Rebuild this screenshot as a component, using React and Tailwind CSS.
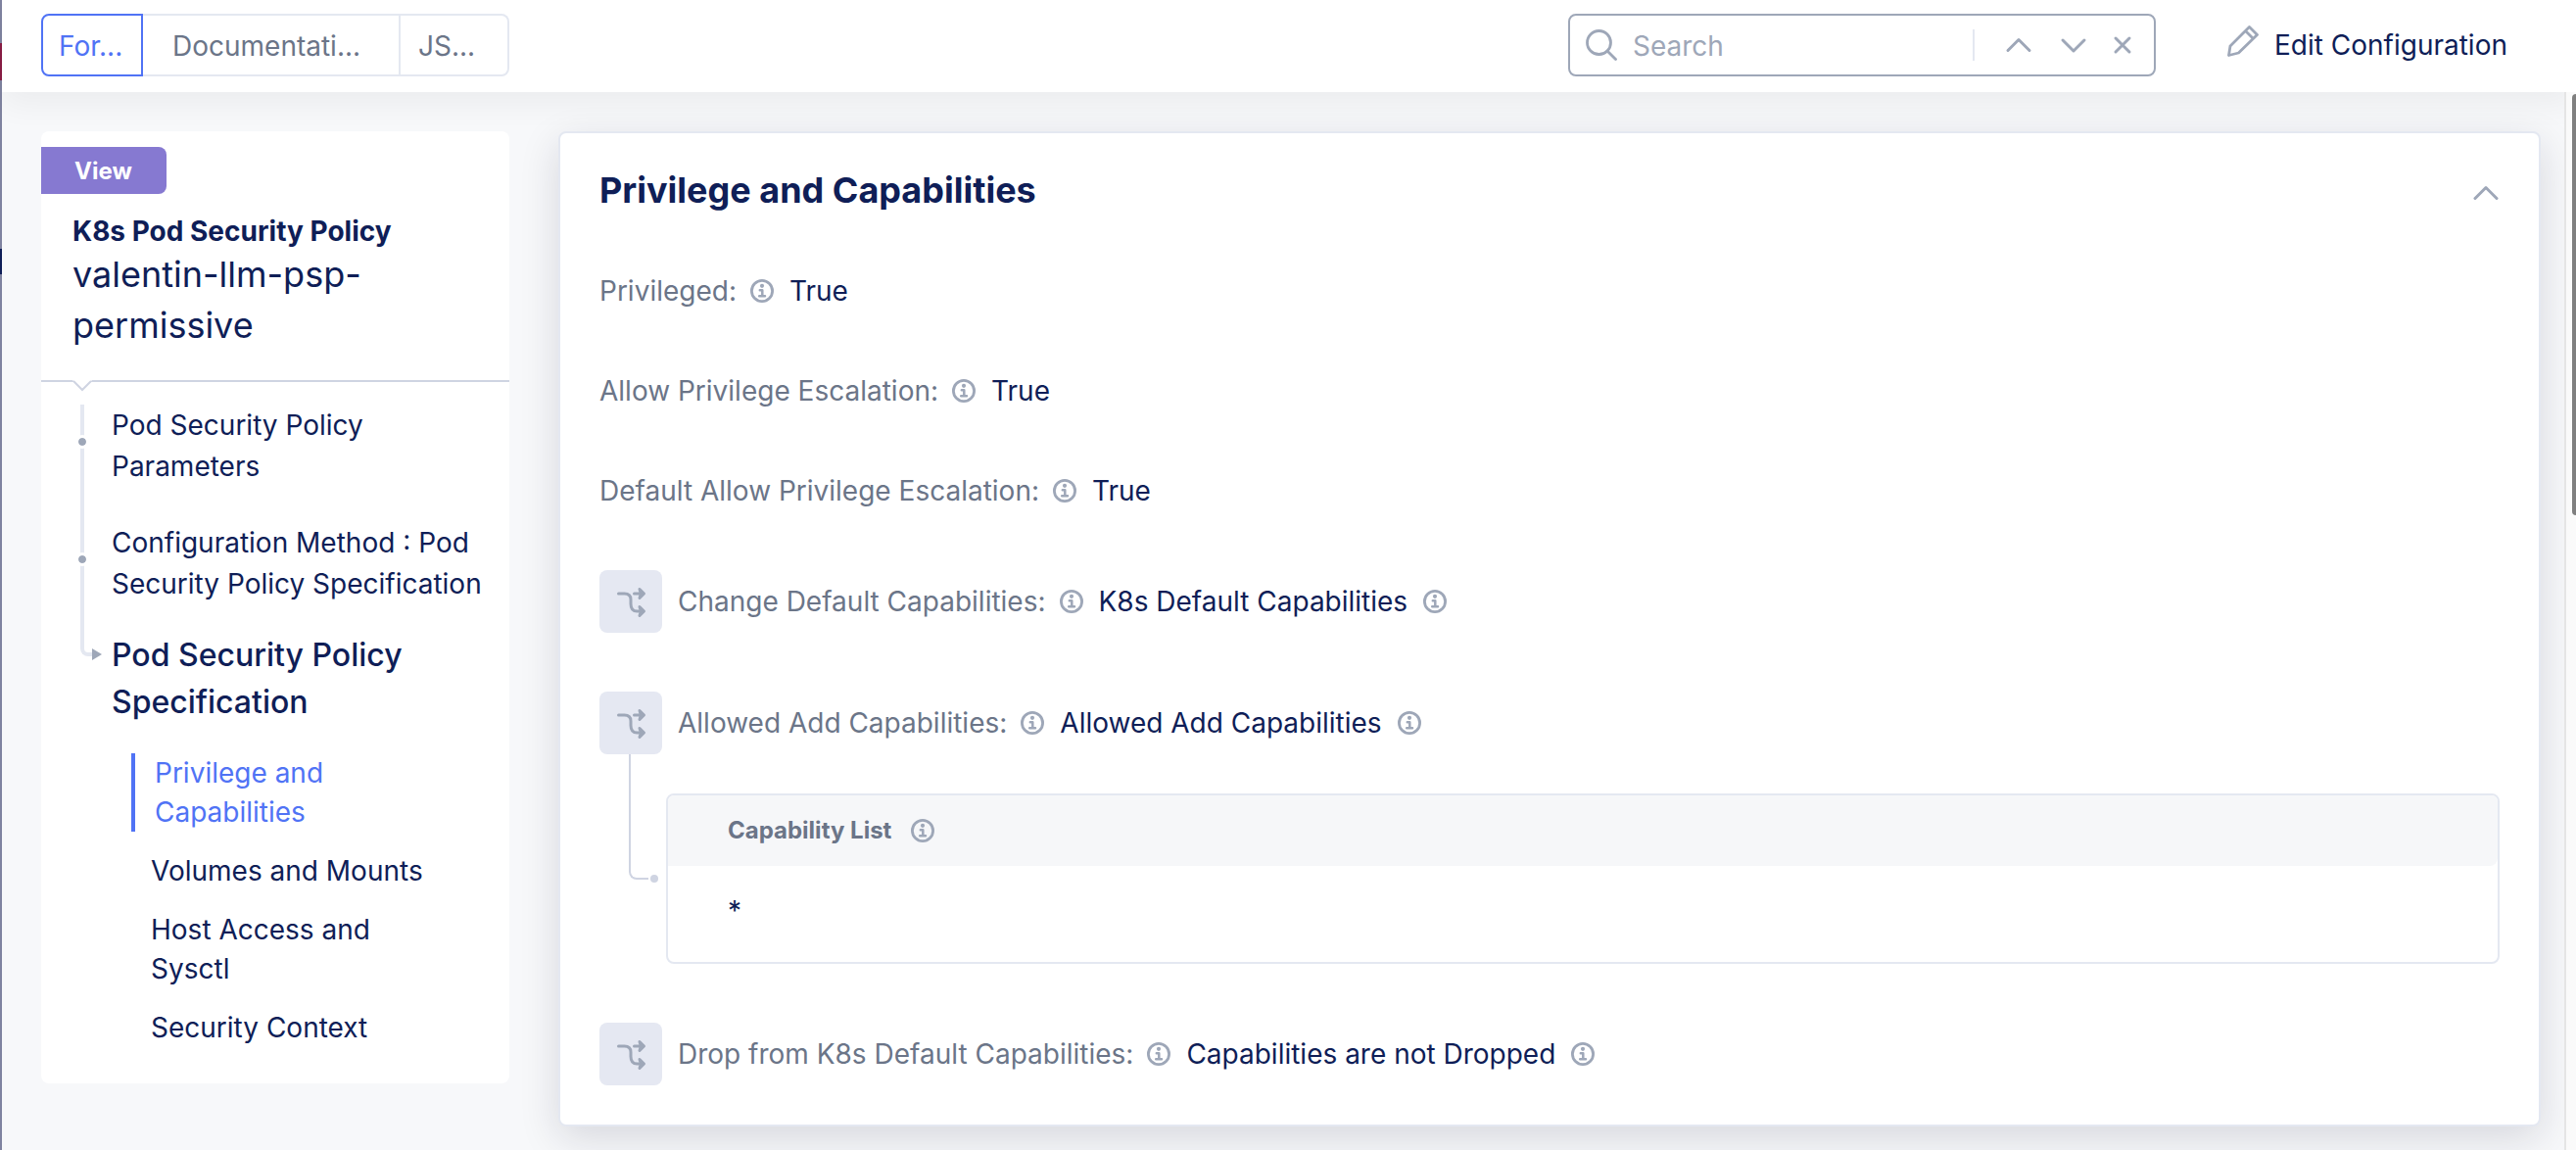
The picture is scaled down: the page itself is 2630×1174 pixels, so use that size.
import React from "react";

function InfoIcon({ label }) {
  return (
    <button type="button" aria-label={label} className="shrink-0">
      <svg viewBox="0 0 24 24" className="block size-6" fill="none" stroke="#9ea7b8">
        <circle cx="12" cy="12" r="10.6" strokeWidth="2.8" />
        <circle cx="12" cy="6.800" r="2.100" fill="#9ea7b8" stroke="none" />
        <path d="M9.800 11.200h2.500v5.800M9.200 17.300h5.800" strokeWidth="2.500" strokeLinecap="round" strokeLinejoin="round" />
      </svg>
    </button>
  );
}

function ChoiceIcon() {
  return (
    <span className="flex size-16 shrink-0 items-center justify-center rounded-lg bg-[#e5e8f2]">
      <svg viewBox="0 0 64 64" className="block size-16" fill="none" stroke="#9ea7b8" strokeWidth="3" strokeLinecap="round" strokeLinejoin="round">
        <path d="M19.500 24h6c4.500 0 6.500 2 6.500 6v4.500c0 5 2.500 7.500 6.500 7.500h6" />
        <path d="M35.500 24h9M41 19.500l4.500 4.500l-4.500 4.500l1.500-4.500zM41 37.500l4.500 4.500l-4.500 4.500l1.500-4.500z" fill="#9ea7b8" />
      </svg>
    </span>
  );
}

function Chevron({ down }) {
  return (
    <svg viewBox="0 0 28 28" className="block size-7" fill="none" stroke="#9ea7b8" strokeWidth="3" strokeLinecap="round" strokeLinejoin="round">
      <path d={down ? "M3 9l11 11l11-11" : "M3 19.500l11-11l11 11"} />
    </svg>
  );
}

function Field({ label, value, choice, valueInfo }) {
  return (
    <div className="flex items-center gap-4">
      {choice && <ChoiceIcon />}
      <dt className="flex items-center gap-[14px] text-[#6b7588]">
        <span>{label}:</span>
        <InfoIcon label={`About ${label}`} />
      </dt>
      <dd className="flex items-center gap-4">
        <span>{value}</span>
        {valueInfo && <InfoIcon label={`About ${value}`} />}
      </dd>
    </div>
  );
}

function Header() {
  return (
    <header className="flex h-[94px] items-start justify-between bg-white pt-[14px] pr-[70px] pl-10 shadow-[0_12px_32px_rgba(0,0,0,0.05)]">
      <div className="flex h-16 w-[478px] leading-[42px] text-[#6b7588]">
        <button type="button" className="w-[104px] rounded-l-lg border-2 border-[#5073f5] pt-[2px] pl-4 text-left text-[#5073f5]">
          For...
        </button>
        <button type="button" className="grow border-y-2 border-r-2 border-[#e4e8f1] pt-[2px] pl-[30px] text-left">
          Documentati...
        </button>
        <button type="button" className="w-[111px] rounded-r-lg border-y-2 border-r-2 border-[#e4e8f1] pt-[2px] pl-[18px] text-left">
          JS...
        </button>
      </div>
      <div className="flex items-start gap-[73px]">
        <div className="flex h-16 w-[600px] items-center rounded-lg border-2 border-[#9ea7b8] pr-[20px] pl-4">
          <svg viewBox="0 0 32 32" className="block size-8 shrink-0" fill="none" stroke="#9ea7b8" strokeWidth="2.800" strokeLinecap="round">
            <circle cx="13.500" cy="13.500" r="12" />
            <path d="M22 22l8.500 8.500" />
          </svg>
          <input type="text" aria-label="Search" placeholder="Search" className="min-w-0 grow bg-transparent pt-[2px] pl-4 leading-[42px] outline-none placeholder:text-[#9ea7b8]" />
          <span className="h-8 w-[2px] bg-[#e4e8f1]" />
          <button type="button" aria-label="Previous match" className="ml-[31px]"><Chevron /></button>
          <button type="button" aria-label="Next match" className="ml-7"><Chevron down /></button>
          <button type="button" aria-label="Clear search" className="ml-6">
            <svg viewBox="0 0 24 24" className="block size-6" fill="none" stroke="#9ea7b8" strokeWidth="3" strokeLinecap="round">
              <path d="M5 5l14 14M19 5l-14 14" />
            </svg>
          </button>
        </div>
        <button type="button" className="flex h-[64px] items-center gap-4 leading-[42px]">
          <svg viewBox="0 0 32 32" className="mb-2 block size-8" fill="none" stroke="#9ea7b8" strokeWidth="2.800" strokeLinejoin="round">
            <path d="M1.500 30.500l1.500-9.500L22.500 1.500l8 8L11.500 28zM18.500 5.500l8 8" />
          </svg>
          Edit Configuration
        </button>
      </div>
    </header>
  );
}

function Dot() {
  return <span className="absolute top-[34px] left-[38px] size-2 rounded-full bg-[#9ea7b8] outline-[3px] outline-white" />;
}

function Sidebar() {
  return (
    <aside className="w-[478px] shrink-0 rounded-lg bg-white pt-4 pb-[37px]">
      <span className="flex h-12 w-32 items-center rounded-r-lg bg-[#8679d1] pt-[2px] pl-[34px] text-2xl font-bold text-white">View</span>
      <div className="relative border-b-2 border-[#cfd4e2] px-8 pt-5 pb-[30px]">
        <p className="leading-9 font-bold">K8s Pod Security Policy</p>
        <p className="text-[36px] leading-[52px]">
          valentin-llm-psp-
          <br />
          permissive
        </p>
        <svg viewBox="0 0 20 12" className="absolute -bottom-[12px] left-8 h-3 w-5" fill="#fff">
          <path d="M0 0h20L10 10z" />
          <path d="M1 1l9 9l9-9" fill="none" stroke="#cfd4e2" strokeWidth="2" />
        </svg>
      </div>
      <nav className="pt-[23px] leading-[42px]">
        <div className="relative">
          <span className="absolute top-0 left-10 h-[257px] w-4 rounded-bl-lg border-b-4 border-l-4 border-[#e4e8f1]" />
          <div className="relative pb-9 pl-[72px]">
            <Dot />
            <a href="#parameters" className="block">Pod Security Policy<br />Parameters</a>
          </div>
          <div className="relative pb-7 pl-[72px]">
            <Dot />
            <a href="#method" className="block whitespace-nowrap">Configuration Method : Pod<br />Security Policy Specification</a>
          </div>
          <div className="relative pb-7 pl-[72px] text-[32px] leading-[48px] font-medium">
            <svg viewBox="0 0 10 12" className="absolute top-[17px] left-[52px] h-3 w-[10px]" fill="#9ea7b8">
              <path d="M0 0l10 6L0 12z" />
            </svg>
            <a href="#specification" className="block">Pod Security Policy<br />Specification</a>
          </div>
        </div>
        <ul className="flex flex-col gap-5 pl-[92px] leading-10">
          <li><a href="#privilege" className="block border-l-4 border-[#5073f5] pl-5 text-[#5073f5]">Privilege and<br />Capabilities</a></li>
          <li><a href="#volumes" className="block pl-5">Volumes and Mounts</a></li>
          <li><a href="#host" className="block pl-5">Host Access and<br />Sysctl</a></li>
          <li><a href="#context" className="block pl-5">Security Context</a></li>
        </ul>
      </nav>
    </aside>
  );
}

function Panel() {
  return (
    <section className="min-w-0 grow rounded-lg border-2 border-[#e4e8f1] bg-white px-10 pt-9 pb-10 shadow-[0_12px_40px_rgba(20,20,50,0.14)]">
      <div className="flex items-center justify-between">
        <h2 className="text-[36px] leading-[44px] font-bold">Privilege and Capabilities</h2>
        <button type="button" aria-label="Collapse section" className="pt-1.5"><Chevron /></button>
      </div>
      <dl className="mt-[60px] flex flex-col gap-[60px] leading-[42px]">
        <Field label="Privileged" value="True" />
        <Field label="Allow Privilege Escalation" value="True" />
        <Field label="Default Allow Privilege Escalation" value="True" />
        <Field choice label="Change Default Capabilities" value="K8s Default Capabilities" valueInfo />
        <div>
          <Field choice label="Allowed Add Capabilities" value="Allowed Add Capabilities" valueInfo />
          <dd className="flex">
            <div className="flex h-32 w-[68px] shrink-0 items-end pl-[30px]">
              <span className="h-32 w-5 rounded-bl-lg border-b-2 border-l-2 border-[#cfd4e2]" />
              <span className="-mb-[3px] ml-[2px] size-2 rounded-full bg-[#cfd4e2]" />
            </div>
            <div className="mt-10 grow rounded-lg border-2 border-[#e4e8f1]">
              <table className="w-full text-left">
                <thead>
                  <tr>
                    <th scope="col" className="h-[72px] rounded-t-md rounded-br-lg bg-[#f6f7f9] p-0 pl-[61px] text-2xl font-bold text-[#6b7588]">
                      <span className="flex items-center gap-5">Capability List <InfoIcon label="About Capability List" /></span>
                    </th>
                  </tr>
                </thead>
                <tbody>
                  <tr><td className="h-[98px] p-0 pb-1.5 pl-[61px]">*</td></tr>
                </tbody>
              </table>
            </div>
          </dd>
        </div>
        <Field choice label="Drop from K8s Default Capabilities" value="Capabilities are not Dropped" valueInfo />
      </dl>
    </section>
  );
}

export default function App() {
  return (
    <div className="flex min-h-screen bg-[#f7f8fa] font-['Inter',sans-serif] text-[28px] text-[#0f1e57]">
      <div className="flex w-[2px] shrink-0 flex-col bg-[#7f83a0]">
        <span className="mt-11 h-[38px] bg-[#8a1d45]" />
        <span className="mt-[172px] h-[26px] bg-[#0f1e57]" />
      </div>
      <div className="flex min-w-0 grow flex-col">
        <Header />
        <div className="flex grow">
          <main className="flex min-w-0 grow items-start gap-[50px] pt-10 pr-6 pb-6 pl-10">
            <Sidebar />
            <Panel />
          </main>
          <div className="flex w-3 shrink-0 justify-end border-l-2 border-[#e5e5e5] bg-[#fafafa] pt-[2px]">
            <span className="h-[430px] w-1 rounded-l-full bg-[#7f7f7f]" />
          </div>
        </div>
      </div>
    </div>
  );
}
